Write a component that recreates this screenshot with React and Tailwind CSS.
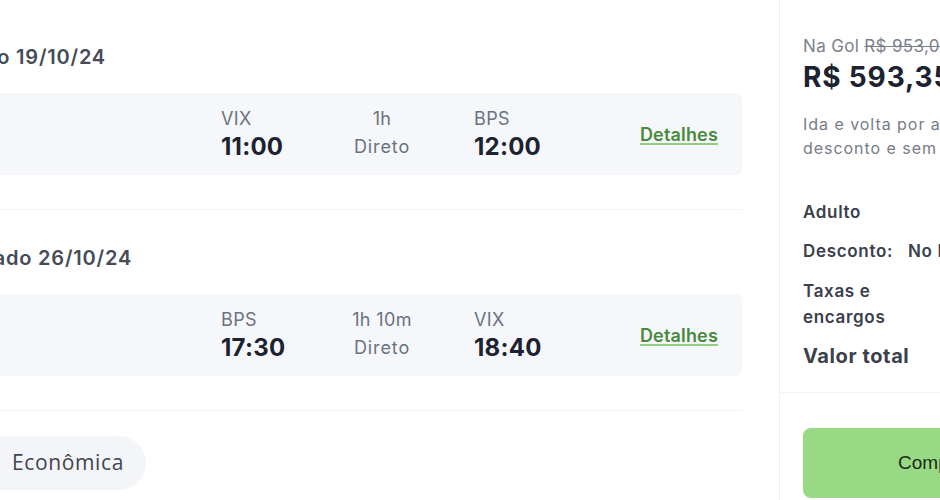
import React from "react";

const font = { fontFamily: "Inter, 'Noto Sans', sans-serif" };

function Heading({ text, endX }) {
  return (
    <div className="flex justify-end h-[28px]" style={{ width: endX }}>
      <span className="whitespace-nowrap text-[20px] leading-[28px] font-semibold text-[#454c59] tracking-[0.04em]">
        {text}
      </span>
    </div>
  );
}

function FlightCard({ from, dep, dur, to, arr }) {
  return (
    <div className="flex items-center h-[82px] bg-[#f5f7fa] rounded-r-md pl-[221px] pr-6">
      <div className="w-[121px] flex flex-col">
        <span className="text-[18px] leading-[26px] text-[#6b7280] tracking-[0.02em]">{from}</span>
        <span className="text-[24px] leading-[30px] font-bold text-[#1c2230] tracking-[0.01em]">{dep}</span>
      </div>
      <div className="w-[80px] flex flex-col items-center">
        <span className="text-[18px] leading-[26px] text-[#6b7280] whitespace-nowrap tracking-[0.02em]">{dur}</span>
        <span className="text-[18px] leading-[30px] text-[#6b7280] tracking-[0.05em]">Direto</span>
      </div>
      <div className="w-[52px]" />
      <div className="flex-1 flex flex-col">
        <span className="text-[18px] leading-[26px] text-[#6b7280] tracking-[0.02em]">{to}</span>
        <span className="text-[24px] leading-[30px] font-bold text-[#1c2230] tracking-[0.01em]">{arr}</span>
      </div>
      <a className="text-[18px] font-semibold text-[#4a8a3d] underline decoration-[#8fcf7f] decoration-2 underline-offset-2 tracking-[0.01em]">
        Detalhes
      </a>
    </div>
  );
}

export default function App() {
  return (
    <div className="w-[940px] h-[500px] overflow-hidden bg-white flex" style={font}>
      <div className="w-[779px] shrink-0 pr-[37px] flex flex-col">
        <div className="pt-[43px]">
          <Heading text="Ida · Sábado 19/10/24" endX={106} />
        </div>
        <div className="mt-[22px]">
          <FlightCard from="VIX" dep="11:00" dur="1h" to="BPS" arr="12:00" />
        </div>
        <div className="mt-[34px] h-px bg-[#f1f3f6]" />
        <div className="pt-[34px]">
          <Heading text="Volta · Sábado 26/10/24" endX={132} />
        </div>
        <div className="mt-[22px]">
          <FlightCard from="BPS" dep="17:30" dur="1h 10m" to="VIX" arr="18:40" />
        </div>
        <div className="mt-[34px] h-px bg-[#f1f3f6]" />
        <div className="mt-[25px] flex">
          <div className="h-[54px] w-[146px] rounded-r-full bg-[#f3f5f8] flex items-center pl-3">
            <span className="text-[21px] text-[#3f4550] tracking-[0.03em]" style={{ fontFamily: "'Open Sans', sans-serif" }}>
              Econômica
            </span>
          </div>
        </div>
      </div>
      <div className="w-[310px] shrink-0 border-l border-[#eef0f3] flex flex-col">
        <div className="pl-[23px] pr-[23px] pt-[35px] pb-[24px] border-b border-[#f0f2f5]">
          <div className="text-[17px] leading-[22px] text-[#7b818c] whitespace-nowrap tracking-[0.02em]">
            Na Gol <span className="line-through">R$ 953,05</span>
          </div>
          <div className="text-[28px] leading-[34px] font-bold text-[#1c2230] whitespace-nowrap mt-[3px] tracking-[0.03em]">
            R$ 593,35
          </div>
          <div className="mt-[18px] text-[16px] leading-[24px] text-[#767c87] w-[260px] tracking-[0.06em]">
            Ida e volta por adulto com desconto e sem taxas
          </div>
          <div className="mt-[40px] flex flex-col gap-[15px] text-[17px] font-semibold text-[#3a404c] tracking-[0.04em]">
            <div className="leading-[24px]">Adulto</div>
            <div className="leading-[24px] flex whitespace-nowrap">
              <span className="w-[105px]">Desconto:</span>
              <span>No PIX</span>
            </div>
            <div className="leading-[26px] w-[100px]">Taxas e encargos</div>
            <div className="leading-[24px] text-[20px] font-bold text-[#3a404c] -mt-[1px] tracking-[0.03em]">Valor total</div>
          </div>
        </div>
        <div className="pl-[23px] pt-[35px]">
          <button className="w-[264px] h-[70px] rounded-lg bg-[#98d983] text-[19px] text-[#1b2a1b]" style={{ fontFamily: "'Liberation Sans', Arial, sans-serif" }}>
            Comprar
          </button>
        </div>
      </div>
    </div>
  );
}
